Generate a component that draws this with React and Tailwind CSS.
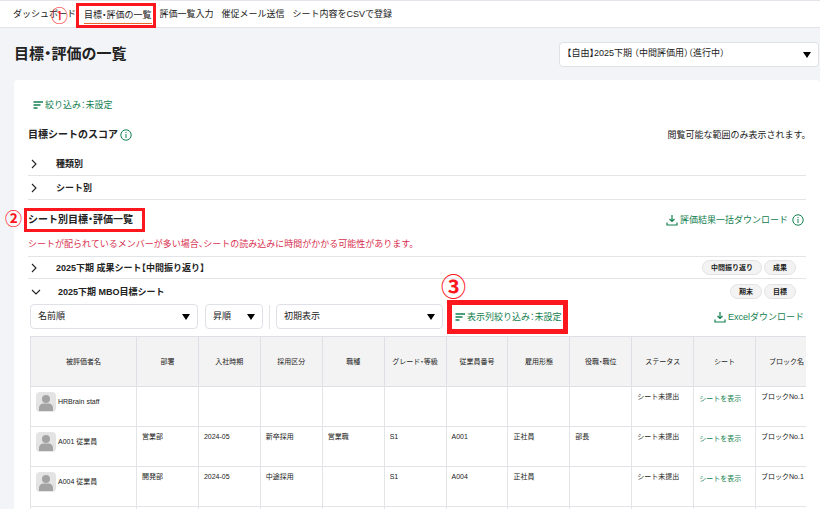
import React from "react";

const navItems = [
  "ダッシュボード",
  "目標・評価の一覧",
  "評価一覧入力",
  "催促メール送信",
  "シート内容をCSVで登録",
];

const columns = [
  "部署",
  "入社時期",
  "採用区分",
  "職種",
  "グレード・等級",
  "従業員番号",
  "雇用形態",
  "役職・職位",
  "ステータス",
];

const members = [
  { name: "HRBrain staff", cells: ["", "", "", "", "", "", "", "", "シート未提出"] },
  {
    name: "A001 従業員",
    cells: ["営業部", "2024-05", "新卒採用", "営業職", "S1", "A001", "正社員", "部長", "シート未提出"],
  },
  {
    name: "A004 従業員",
    cells: ["開発部", "2024-05", "中途採用", "", "S1", "A004", "正社員", "", "シート未提出"],
  },
];

function FilterIcon() {
  return (
    <svg className="h-2.5 w-2.5 shrink-0" viewBox="0 0 10 10" stroke="currentColor" strokeWidth="1.3" fill="none">
      <path d="M0.500 2h9.500M0.500 5h7M0.500 8h4" />
    </svg>
  );
}

function DownloadIcon() {
  return (
    <svg className="h-3 w-3 shrink-0" viewBox="0 0 12 12" stroke="currentColor" strokeWidth="1.2" fill="none">
      <path d="M6 1v6.500M3.500 5L6 7.500 8.500 5M1 8.500V11h10V8.500" />
    </svg>
  );
}

function InfoIcon() {
  return (
    <svg className="h-3 w-3 shrink-0" viewBox="0 0 12 12" stroke="currentColor" fill="none">
      <circle cx="6" cy="6" r="5.2" />
      <path d="M6 5v4M6 3v1.1" />
    </svg>
  );
}

function Chevron({ open }) {
  return (
    <svg className="h-3 w-3 shrink-0" viewBox="0 0 12 12" stroke="#222" strokeWidth="1.1" fill="none">
      <path d={open ? "M2 4l4 4 4-4" : "M4 2l4 4-4 4"} />
    </svg>
  );
}

function Avatar() {
  return (
    <svg className="h-5 w-5 shrink-0 rounded-sm bg-[#e4e4e4]" viewBox="0 0 20 20" fill="#a3a3a3">
      <circle cx="10" cy="7" r="4" />
      <path d="M3 19v-3c0-3 2-4.500 4.500-4.500h5c2.500 0 4.500 1.500 4.500 4.500v3z" />
    </svg>
  );
}

function Select({ label, value, className }) {
  return (
    <div className={`relative ${className}`}>
      <select
        aria-label={label}
        className="h-[25px] w-full appearance-none rounded-sm border border-[#dfe1e6] bg-white pr-5 pb-0.5 pl-[7px]"
      >
        <option>{value}</option>
      </select>
      <svg className="pointer-events-none absolute top-[10px] right-2 h-1.5 w-2" viewBox="0 0 8 6">
        <path d="M0 0h8L4 6z" />
      </svg>
    </div>
  );
}

function Tag({ children }) {
  return (
    <span className="flex h-[15px] items-center rounded-full border border-[#e2e2e2] bg-[#f3f3f3] px-2 text-[7px] font-bold">
      {children}
    </span>
  );
}

function App() {
  return (
    <div className="h-screen overflow-hidden bg-white pr-1 font-['Liberation_Sans','Noto_Sans_CJK_JP',sans-serif] text-[9px] leading-3 text-[#222] [font-feature-settings:'halt']">
      <div className="min-h-full bg-[#f3f4f8]">
        {/* Navigation */}
        <nav className="flex h-7 items-center gap-2 border-t border-b border-[#e3e4ea] bg-white pl-[13px] whitespace-nowrap">
          {navItems.map((item, i) =>
            i === 1 ? (
              <span key={item} className="relative">
                <a href="#list" className="block border-b border-[#e8672c] pt-1 pb-0.5">
                  {item}
                </a>
                <span className="absolute -top-0.5 -right-1 -bottom-1 -left-2 border-3 border-[#fc171e]" />
                <span className="absolute top-0 right-full mr-4 text-[17px] leading-6 text-[#fc171e]">①</span>
              </span>
            ) : (
              <a key={item} href="#nav">
                {item}
              </a>
            )
          )}
        </nav>

        {/* Page title */}
        <header className="flex h-[52px] items-center justify-between pl-3.5">
          <h1 className="text-[15px] leading-5 font-bold">目標・評価の一覧</h1>
          <Select label="評価期間" value="【自由】2025下期 （中間評価用）（進行中）" className="mr-px w-[260px]" />
        </header>

        <main className="ml-3.5 rounded-t-sm bg-white px-3.5 pt-[19px]">
          <button className="ml-[5px] flex items-center gap-0.5 text-[#12804f]">
            <FilterIcon />
            絞り込み：未設定
          </button>

          {/* Score */}
          <section className="mt-4">
            <div className="flex h-4 items-center justify-between">
              <h2 className="flex items-center gap-0.5 text-[10px] font-bold">
                目標シートのスコア
                <span className="text-[#12804f]">
                  <InfoIcon />
                </span>
              </h2>
              <p>閲覧可能な範囲のみ表示されます。</p>
            </div>
            <div className="mt-[9px]">
              {["種類別", "シート別"].map((label) => (
                <button
                  key={label}
                  className="flex h-6 w-full items-center gap-4 border-b border-[#e3e4e8] font-bold"
                >
                  <Chevron />
                  {label}
                </button>
              ))}
            </div>
          </section>

          {/* Sheet list */}
          <section className="mt-3">
            <div className="flex h-4 items-center justify-between">
              <h2 className="relative text-[10px] font-bold">
                シート別目標・評価一覧
                <span className="absolute -top-1.5 -right-3 -bottom-1.5 -left-1 border-3 border-[#fc171e]" />
                <span className="absolute -top-1 right-full mr-1.5 text-[17px] leading-5 text-[#fc171e]">②</span>
              </h2>
              <div className="flex items-center gap-1 pr-0.5 text-[#12804f]">
                <button className="flex items-center gap-0.5">
                  <DownloadIcon />
                  評価結果一括ダウンロード
                </button>
                <button aria-label="ダウンロードについて">
                  <InfoIcon />
                </button>
              </div>
            </div>
            <p className="mt-2.5 text-[#d8304f]">
              シートが配られているメンバーが多い場合、シートの読み込みに時間がかかる可能性があります。
            </p>

            <div className="mt-1.5 flex h-[23px] items-center justify-between border-t border-b border-[#e3e4e8]">
              <button className="flex items-center gap-4 font-bold">
                <Chevron />
                2025下期 成果シート【中間振り返り】
              </button>
              <div className="flex gap-0.5 pr-2.5">
                <Tag>中間振り返り</Tag>
                <Tag>成果</Tag>
              </div>
            </div>
            <div className="flex h-[25px] items-center justify-between">
              <button className="flex items-center gap-4 pl-0.5 font-bold">
                <Chevron open />
                2025下期 MBO目標シート
              </button>
              <div className="flex gap-0.5 pr-2.5">
                <Tag>期末</Tag>
                <Tag>目標</Tag>
              </div>
            </div>

            {/* Sort and column filters */}
            <div className="flex items-center pl-0.5">
              <Select label="並び替え" value="名前順" className="w-[168px]" />
              <Select label="順序" value="昇順" className="ml-[7px] w-[58px]" />
              <span className="mx-1.5 h-6 w-px bg-[#e3e4e8]" />
              <Select label="表示設定" value="初期表示" className="w-[167px]" />
              <div className="relative ml-3">
                <button className="flex items-center gap-0.5 whitespace-nowrap text-[#12804f]">
                  <FilterIcon />
                  表示列絞り込み：未設定
                </button>
                <span className="pointer-events-none absolute -inset-y-[11px] -right-1.5 -left-2 border-5 border-[#fc171e]" />
                <span className="absolute -top-9 -left-3.5 text-[25px] leading-6 font-bold text-[#fc171e]">③</span>
              </div>
              <button className="mr-0.5 ml-auto flex items-center gap-0.5 text-[#12804f]">
                <DownloadIcon />
                Excelダウンロード
              </button>
            </div>

            <div className="mt-[7px] ml-0.5 overflow-x-auto">
              <table className="w-[788px] table-fixed border-collapse text-[7px] leading-3">
                <thead>
                  <tr className="h-[50px] bg-[#f3f3f3]">
                    <th className="w-[106px] border border-[#dfe0e6] font-normal">被評価者名</th>
                    {columns.map((c) => (
                      <th key={c} className="border border-[#dfe0e6] font-normal">
                        {c}
                      </th>
                    ))}
                    <th className="border border-[#dfe0e6] font-normal">シート</th>
                    <th className="border border-[#dfe0e6] font-normal">ブロック名</th>
                  </tr>
                </thead>
                <tbody>
                  {members.map((m) => (
                    <tr key={m.name} className="h-10 align-top">
                      <td className="border border-[#e3e4e8] px-[5px] pt-[5px]">
                        <div className="flex items-center gap-0.5">
                          <Avatar />
                          {m.name}
                        </div>
                      </td>
                      {m.cells.map((cell, i) => (
                        <td key={i} className="border border-[#e3e4e8] px-[5px] pt-1 whitespace-nowrap">
                          {cell}
                        </td>
                      ))}
                      <td className="border border-[#e3e4e8] px-[5px] pt-1.5 whitespace-nowrap">
                        <a href="#sheet" className="text-[#12804f]">
                          シートを表示
                        </a>
                      </td>
                      <td className="border border-[#e3e4e8] px-[5px] pt-1 whitespace-nowrap">ブロックNo.1</td>
                    </tr>
                  ))}
                  <tr className="h-10">
                    {Array.from({ length: 12 }, (_, i) => (
                      <td key={i} className="border border-[#e3e4e8]" />
                    ))}
                  </tr>
                </tbody>
              </table>
            </div>
          </section>
        </main>
      </div>
    </div>
  );
}

export default App;
